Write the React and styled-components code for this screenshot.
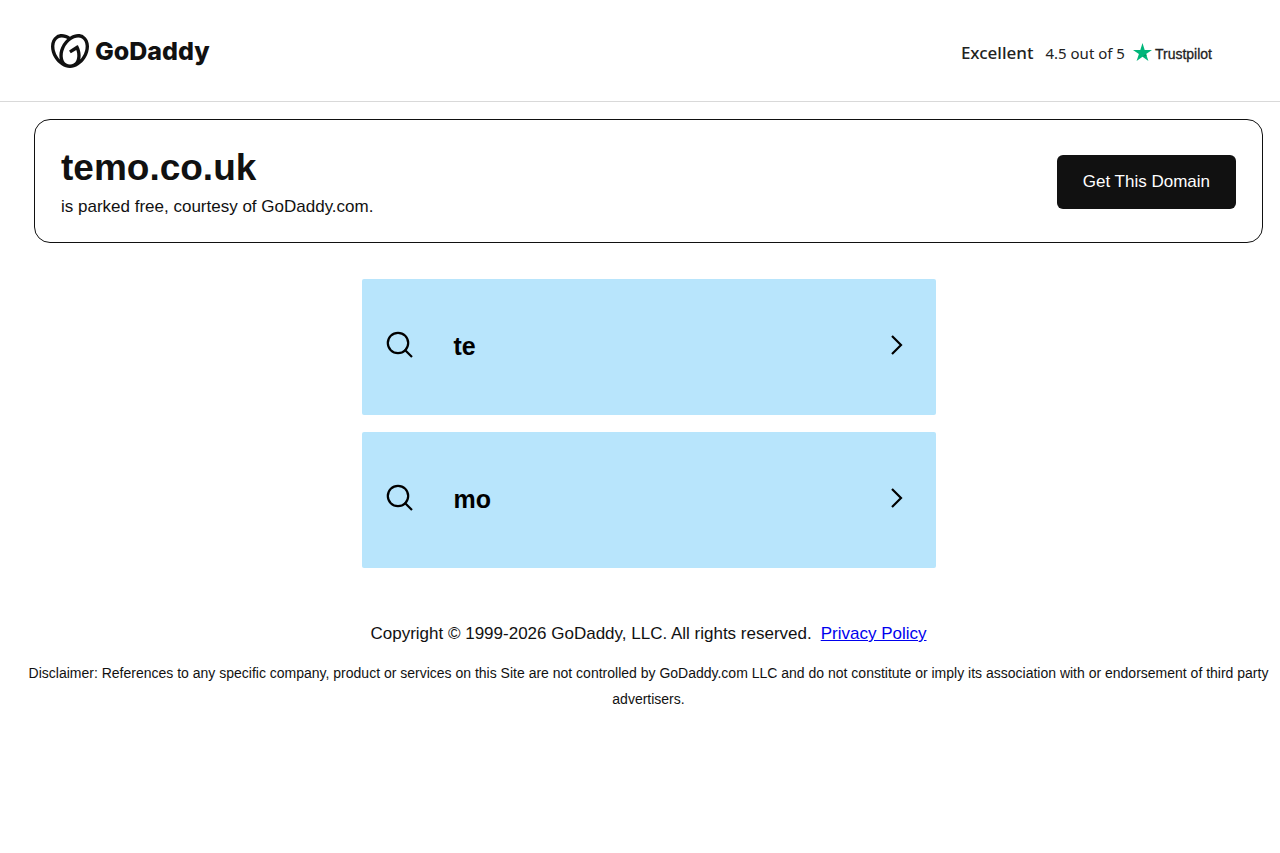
import React from 'react'
import styled, { createGlobalStyle } from 'styled-components'
import { SiGodaddy } from 'react-icons/si'

const GlobalStyle = createGlobalStyle`
  * {
    box-sizing: border-box;
  }
  body {
    margin: 0;
    background: #fff;
    color: #111;
    font-family: "Liberation Sans", Arial, sans-serif;
    font-size: 17px;
  }
`
const Header = styled.header`
  display: flex;
  align-items: center;
  justify-content: space-between;
  height: 102px;
  padding: 0 68px 0 51px;
  border-bottom: 1px solid #d9d9d9;
`
const Logo = styled.a`
  display: flex;
  align-items: center;
  gap: 6px;
  color: #111;
  text-decoration: none;
`
const Wordmark = styled.span`
  font-family: Inter, sans-serif;
  font-size: 25px;
  font-weight: 800;
  line-height: 32px;
`
const Rating = styled.a`
  display: flex;
  align-items: baseline;
  padding-top: 6px;
  color: #222;
  font-family: "Noto Sans", sans-serif;
  font-size: 15px;
  line-height: 24px;
  text-decoration: none;
`
const Grade = styled.span`
  margin-right: 12px;
  font-size: 17px;
  font-weight: 500;
`
const Star = styled.svg`
  align-self: center;
  width: 19px;
  height: 18px;
  margin: 0 3px 4px 8px;
`
const Trustpilot = styled.span`
  font-family: "Liberation Sans", Arial, sans-serif;
  font-size: 14px;
  -webkit-text-stroke: 0.3px #222;
`
const Main = styled.main`
  padding: 17px 17px 0 34px;
`
const Banner = styled.section`
  display: flex;
  align-items: center;
  justify-content: space-between;
  padding: 23px 26px 21px;
  border: 1px solid #111;
  border-radius: 16px;
`
const Domain = styled.h1`
  margin: 0;
  font-size: 37px;
  line-height: 50px;
`
const Parked = styled.p`
  margin: 0;
  line-height: 28px;
`
const DomainButton = styled.button`
  padding: 0 26px;
  border: 0;
  border-radius: 6px;
  background: #111;
  color: #fff;
  font-family: inherit;
  font-size: 17px;
  line-height: 54px;
  cursor: pointer;
`
const Results = styled.nav`
  display: flex;
  flex-direction: column;
  gap: 17px;
  width: 100%;
  max-width: 574px;
  margin: 36px auto 0;
`
const Result = styled.a`
  display: flex;
  align-items: center;
  height: 136px;
  padding: 0 33px 2px 24px;
  border-radius: 2px;
  background: #b8e5fc;
  color: #000;
  text-decoration: none;
`
const Icon = styled.svg`
  flex: none;
  margin-bottom: 3px;
  fill: none;
  stroke: #000;
  stroke-width: 2.2;
`
const Term = styled.span`
  flex: 1;
  margin-left: 41px;
  font-size: 25px;
  font-weight: bold;
`
const Footer = styled.footer`
  margin: 52px -8px 0;
  text-align: center;
`
const Copyright = styled.p`
  margin: 0;
  line-height: 28px;
`
const PrivacyLink = styled.a`
  margin-left: 9px;
  color: #00e;
`
const Disclaimer = styled.p`
  margin: 12px 0 0;
  font-size: 14px;
  line-height: 26px;
`

const terms = ['te', 'mo']

const SearchResult = ({ term }) => (
  <Result href="#">
    <Icon width="27" height="27" viewBox="0 0 27 27" aria-hidden="true">
      <circle cx="12" cy="12" r="10.200" />
      <path d="M18.500 18.500l7.500 7.500" />
    </Icon>
    <Term>{term}</Term>
    <Icon width="13" height="22" viewBox="0 0 13 22" aria-hidden="true">
      <path d="M2 2l9 9-9 9" />
    </Icon>
  </Result>
)

const App = () => {
  return (
    <>
      <GlobalStyle />
      <Header>
        <Logo href="#">
          <SiGodaddy size={38} aria-hidden="true" />
          <Wordmark>GoDaddy</Wordmark>
        </Logo>
        <Rating href="#">
          <Grade>Excellent</Grade>
          <span>4.5 out of 5</span>
          <Star viewBox="0 0 19 18" aria-hidden="true">
            <path fill="#00b67a" d="M9.5 0l2.2 6.9H19l-5.9 4.2L15.4 18l-5.9-4.3L3.6 18l2.3-6.9L0 6.9h7.3z" />
            <path fill="#00935f" d="M13.6 12.7l-.5-1.6-3.6 2.6z" />
          </Star>
          <Trustpilot>Trustpilot</Trustpilot>
        </Rating>
      </Header>
      <Main>
        <Banner>
          <div>
            <Domain>temo.co.uk</Domain>
            <Parked>is parked free, courtesy of GoDaddy.com.</Parked>
          </div>
          <DomainButton type="button">Get This Domain</DomainButton>
        </Banner>
        <Results>
          {terms.map((term) => (
            <SearchResult key={term} term={term} />
          ))}
        </Results>
        <Footer>
          <Copyright>
            Copyright © 1999-2026 GoDaddy, LLC. All rights reserved.
            <PrivacyLink href="#">Privacy Policy</PrivacyLink>
          </Copyright>
          <Disclaimer>
            Disclaimer: References to any specific company, product or services on this Site are not
            controlled by GoDaddy.com LLC and do not constitute or imply its association with or
            endorsement of third party advertisers.
          </Disclaimer>
        </Footer>
      </Main>
    </>
  )
}

export default App
